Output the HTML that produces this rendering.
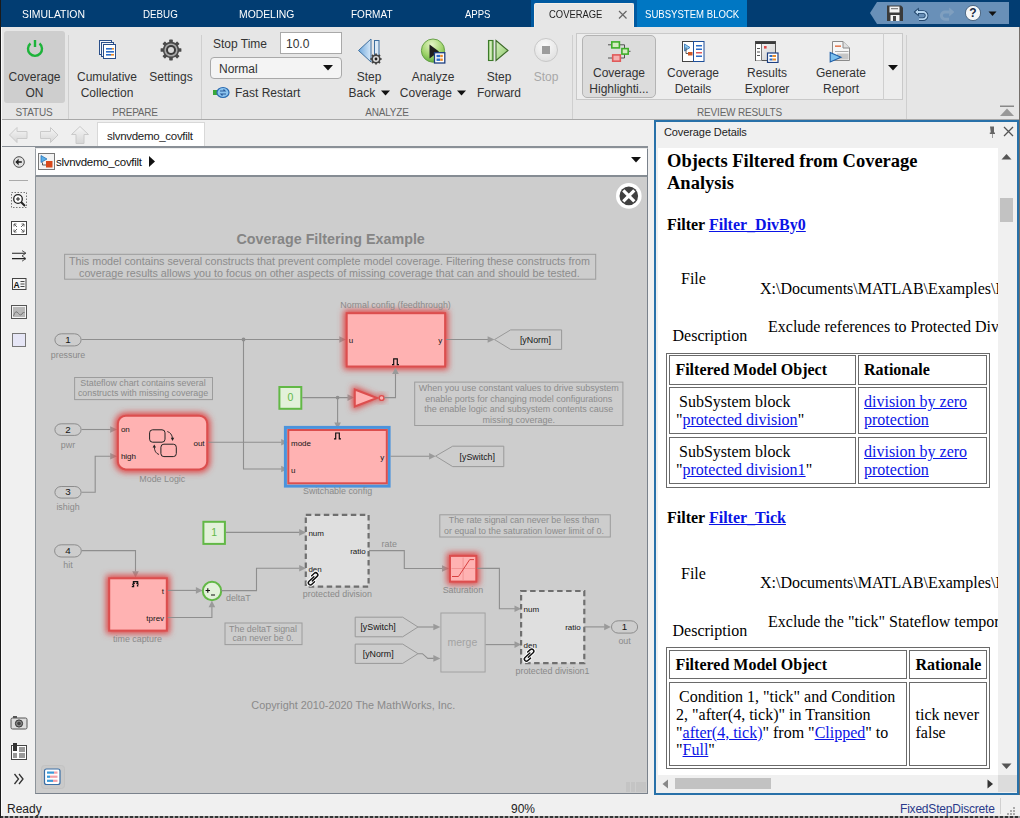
<!DOCTYPE html>
<html><head><meta charset="utf-8">
<style>
*{margin:0;padding:0;box-sizing:border-box}
html,body{width:1020px;height:818px;overflow:hidden;background:#f0f0f0;font-family:"Liberation Sans",sans-serif;position:relative}
.a{position:absolute}
#topbar{left:0;top:0;width:1020px;height:27px;background:#023d72}
.tt{position:absolute;top:7px;color:#fff;font-size:11.5px;line-height:14px;transform-origin:0 0}
#ribbon{left:0;top:27px;width:1020px;height:93px;background:#e6e6e6;border-bottom:1px solid #a8a8a8}
.lbl{position:absolute;font-size:12px;color:#333;text-align:center;line-height:16px}
.sec{position:absolute;top:80px;font-size:10px;letter-spacing:-0.2px;color:#666;text-align:center}
.vsep{position:absolute;width:1px;background:#cfcfcf}
#pc div{position:absolute;white-space:nowrap}
.s16{font:16px/16px "Liberation Serif",serif;color:#000}
.b16{font:bold 16px/16px "Liberation Serif",serif;color:#000}
.h18{font:bold 18.5px/22px "Liberation Serif",serif;color:#000}
.lk{color:#0a14e6;text-decoration:underline;text-underline-offset:1px}
.bx{border:1px solid #6a6a6a}
</style></head><body>
<div id="topbar" class="a">
  <div class="tt" style="left:22px;transform:scaleX(0.907)">SIMULATION</div>
  <div class="tt" style="left:142.5px;transform:scaleX(0.851)">DEBUG</div>
  <div class="tt" style="left:238.6px;transform:scaleX(0.902)">MODELING</div>
  <div class="tt" style="left:351.2px;transform:scaleX(0.870)">FORMAT</div>
  <div class="tt" style="left:465.3px;transform:scaleX(0.831)">APPS</div>
  <div class="a" style="left:531px;top:0;width:106px;height:27px;background:#0059a0"></div>
  <div class="a" style="left:534px;top:3px;width:100px;height:24px;background:#e6e6e6;border:1px solid #f4efe8;border-bottom:none;border-radius:2px 2px 0 0"></div>
  <div class="tt" style="left:549.2px;transform:scaleX(0.819);color:#222">COVERAGE</div>
  <svg class="a" style="left:618px;top:10px" width="10" height="10"><path d="M1 1 L8.5 8.5 M8.5 1 L1 8.5" stroke="#666" stroke-width="1.2"/></svg>
  <div class="a" style="left:637px;top:0;width:110px;height:27px;background:#0077c3"></div>
  <div class="tt" style="left:645px;transform:scaleX(0.833)">SUBSYSTEM BLOCK</div>
  <svg class="a" style="left:868px;top:2px" width="142" height="22"><polygon points="2,11 9,0 141,0 141,22 9,22" fill="#6990b8"/></svg>
  <svg class="a" style="left:886px;top:4px" width="18" height="18" viewBox="0 0 18 18"><path d="M1 1.5 H15 L17 3.5 V17 H1 Z" fill="#3a3a3a"/><rect x="3.5" y="2.5" width="10" height="6" fill="#f2f2f2"/><rect x="5" y="4.2" width="7" height="1" fill="#666"/><rect x="4.5" y="11" width="9" height="6" fill="#f2f2f2"/><rect x="7" y="12" width="3" height="5" fill="#444"/></svg>
  <svg class="a" style="left:913px;top:7px" width="17" height="14" viewBox="0 0 17 14"><path d="M2.5 5 H10 A3.6 3.6 0 0 1 10 12.2 H6" fill="none" stroke="#23466c" stroke-width="3.6"/><polygon points="0.6,5 5.8,0.6 5.8,9.4" fill="#23466c"/><path d="M3.5 5 H10 A3.6 3.6 0 0 1 10 12.2 H6" fill="none" stroke="#b9d8f2" stroke-width="1.8"/><polygon points="2.2,5 5,2.6 5,7.4" fill="#b9d8f2"/></svg>
  <svg class="a" style="left:938px;top:7px" width="17" height="14" viewBox="0 0 17 14"><path d="M14.5 5 H7 A3.6 3.6 0 0 0 7 12.2 H11" fill="none" stroke="#7f9fbf" stroke-width="3"/><polygon points="16.4,5 11.2,0.6 11.2,9.4" fill="#7f9fbf"/></svg>
  <svg class="a" style="left:964px;top:4px" width="18" height="18" viewBox="0 0 18 18"><circle cx="9" cy="9" r="7.6" fill="#f4f6f8" stroke="#3a5470" stroke-width="0.8"/><text x="9" y="13.3" font-size="12" font-weight="bold" fill="#1a2a44" text-anchor="middle" font-family="Liberation Sans">?</text></svg>
  <svg class="a" style="left:988px;top:11px" width="10" height="6"><polygon points="0.5,0.5 8.5,0.5 4.5,5" fill="#111"/></svg>
</div>
<div id="ribbon" class="a">
  <div class="a" style="left:4px;top:4px;width:61px;height:72px;background:#cecece;border-radius:3px"></div>
  <svg class="a" style="left:25px;top:11px" width="20" height="20" viewBox="0 0 20 20"><path d="M5.5 5.5 A7 7 0 1 0 14.5 5.5" fill="none" stroke="#1db33a" stroke-width="2.4"/><line x1="10" y1="2" x2="10" y2="9" stroke="#1db33a" stroke-width="2.4"/></svg>
  <div class="lbl" style="left:4px;top:42px;width:61px">Coverage<br>ON</div>
  <div class="sec" style="left:0;width:68px">STATUS</div>
  <div class="vsep" style="left:68px;top:8px;height:84px"></div>

  <svg class="a" style="left:98px;top:12px" width="20" height="21" viewBox="0 0 20 21"><rect x="1.5" y="1.5" width="12" height="14" fill="#f4f6fa" stroke="#2a4f8a"/><rect x="3.5" y="3.5" width="12" height="14" fill="#f4f6fa" stroke="#2a4f8a"/><rect x="5.5" y="5.5" width="12" height="14" fill="#fff" stroke="#2a4f8a"/><rect x="8" y="9" width="6" height="1.6" fill="#2a6cc8"/><rect x="14" y="9" width="2" height="1.6" fill="#e88a2a"/><rect x="8" y="12" width="8" height="1.6" fill="#2a6cc8"/><rect x="8" y="15" width="5" height="1.6" fill="#2a6cc8"/><rect x="13" y="15" width="3" height="1.6" fill="#e88a2a"/></svg>
  <div class="lbl" style="left:72px;top:42px;width:70px">Cumulative<br>Collection</div>
  <svg class="a" style="left:160px;top:12px" width="22" height="22" viewBox="0 0 22 22"><g fill="#4a4a4a"><rect x="9.2" y="0.6" width="3.6" height="4" rx="0.6" transform="rotate(0 11 11)"/><rect x="9.2" y="0.6" width="3.6" height="4" rx="0.6" transform="rotate(45 11 11)"/><rect x="9.2" y="0.6" width="3.6" height="4" rx="0.6" transform="rotate(90 11 11)"/><rect x="9.2" y="0.6" width="3.6" height="4" rx="0.6" transform="rotate(135 11 11)"/><rect x="9.2" y="0.6" width="3.6" height="4" rx="0.6" transform="rotate(180 11 11)"/><rect x="9.2" y="0.6" width="3.6" height="4" rx="0.6" transform="rotate(225 11 11)"/><rect x="9.2" y="0.6" width="3.6" height="4" rx="0.6" transform="rotate(270 11 11)"/><rect x="9.2" y="0.6" width="3.6" height="4" rx="0.6" transform="rotate(315 11 11)"/><circle cx="11" cy="11" r="8.2"/></g><circle cx="11" cy="11" r="6.6" fill="#a8a8a8"/><circle cx="11" cy="11" r="5" fill="#3c3c3c"/><circle cx="11" cy="11" r="3" fill="#d8d8d8"/></svg>
  <div class="lbl" style="left:145px;top:42px;width:52px">Settings</div>
  <div class="sec" style="left:69px;width:132px">PREPARE</div>
  <div class="vsep" style="left:201px;top:8px;height:84px"></div>

  <div class="lbl" style="left:213px;top:9px;text-align:left">Stop Time</div>
  <div class="a" style="left:280px;top:5px;width:62px;height:22px;background:#fff;border:1px solid #a9a9a9"></div>
  <div class="lbl" style="left:286px;top:9px;text-align:left">10.0</div>
  <div class="a" style="left:210px;top:30px;width:132px;height:22px;background:#f4f4f4;border:1px solid #a9a9a9;border-radius:4px"></div>
  <div class="lbl" style="left:219px;top:34px;text-align:left">Normal</div>
  <svg class="a" style="left:323px;top:38px" width="11" height="6"><polygon points="0,0 10,0 5,5.5" fill="#111"/></svg>
  <svg class="a" style="left:213px;top:59px" width="17" height="13" viewBox="0 0 17 13"><rect x="0" y="4" width="4" height="5" fill="#3aa83a"/><ellipse cx="10" cy="6.5" rx="6" ry="5" fill="#8cc4ef" stroke="#2a6ab0" stroke-width="1.2"/><path d="M7 5 h5 l-1.5-1.5 M13 8 h-5 l1.5 1.5" stroke="#2a5a9a" fill="none" stroke-width="1.1"/></svg>
  <div class="lbl" style="left:235px;top:58px;text-align:left">Fast Restart</div>

  <svg class="a" style="left:356px;top:10px" width="28" height="28" viewBox="0 0 28 28"><defs><linearGradient id="gsb" x1="0" y1="0" x2="1" y2="0"><stop offset="0" stop-color="#6fa8dc"/><stop offset="1" stop-color="#d6e8f8"/></linearGradient></defs><polygon points="2.5,16.5 15,28 15,5" fill="url(#gsb)" stroke="#3f6f9f" stroke-width="1" transform="translate(0,-3)"/><rect x="18.5" y="3.5" width="4.5" height="15" fill="#dbe9f6" stroke="#3f6f9f" stroke-width="1"/><g transform="translate(20,22)"><circle r="4.6" fill="#444"/><g stroke="#444" stroke-width="1.8"><line x1="0" y1="-5.6" x2="0" y2="5.6"/><line x1="-5.6" y1="0" x2="5.6" y2="0"/><line x1="-4" y1="-4" x2="4" y2="4"/><line x1="4" y1="-4" x2="-4" y2="4"/></g><circle r="3" fill="#ddd"/><circle r="1.4" fill="#222"/></g></svg>
  <div class="lbl" style="left:345px;top:42px;width:48px">Step<br>Back <svg width="9" height="6" style="margin-left:2px;vertical-align:1px"><polygon points="0,0.5 9,0.5 4.5,5.5" fill="#111"/></svg></div>

  <svg class="a" style="left:419px;top:36px" width="0" height="0"></svg>
  <svg class="a" style="left:420px;top:11px" width="27" height="27" viewBox="0 0 27 27"><defs><radialGradient id="ga" cx="0.45" cy="0.25" r="0.8"><stop offset="0" stop-color="#e6f5c8"/><stop offset="0.6" stop-color="#9fd36a"/><stop offset="1" stop-color="#5aa83a"/></radialGradient></defs><circle cx="13" cy="12.6" r="11.6" fill="url(#ga)" stroke="#5e9a3e" stroke-width="0.9"/><polygon points="9.5,6.5 19,13.5 9.5,20.5" fill="#1e1e1e"/><rect x="14.5" y="14.7" width="10.3" height="10.3" fill="#fff" stroke="#1e3f80" stroke-width="1.3"/><rect x="16.5" y="16.8" width="3.6" height="2.4" fill="#2a6cc8"/><rect x="20.2" y="16.8" width="2.6" height="2.4" fill="#e88a2a"/><rect x="16.5" y="20.5" width="3.6" height="2.4" fill="#2a6cc8"/><rect x="20.2" y="20.5" width="2.6" height="2.4" fill="#e88a2a"/></svg>
  <div class="lbl" style="left:398px;top:42px;width:70px">Analyze<br>Coverage <svg width="9" height="6" style="margin-left:2px;vertical-align:1px"><polygon points="0,0.5 9,0.5 4.5,5.5" fill="#111"/></svg></div>

  <svg class="a" style="left:487px;top:12px" width="23" height="23" viewBox="0 0 23 23"><defs><linearGradient id="gsf" x1="0" y1="0" x2="1" y2="0"><stop offset="0" stop-color="#7cc05a"/><stop offset="0.5" stop-color="#e2f4cf"/><stop offset="1" stop-color="#6fb24a"/></linearGradient><linearGradient id="gsf2" x1="0" y1="0" x2="1" y2="1"><stop offset="0" stop-color="#d6efbf"/><stop offset="1" stop-color="#8cc86a"/></linearGradient></defs><rect x="1.5" y="1.5" width="4.5" height="20" fill="url(#gsf)" stroke="#3d7a2a" stroke-width="1.1"/><polygon points="9,1.5 21,11.5 9,21.5" fill="url(#gsf2)" stroke="#3d6a2a" stroke-width="1.1"/></svg>
  <div class="lbl" style="left:474px;top:42px;width:50px">Step<br>Forward</div>

  <svg class="a" style="left:533px;top:10px" width="26" height="26" viewBox="0 0 26 26"><defs><radialGradient id="gst" cx="0.45" cy="0.3" r="0.75"><stop offset="0" stop-color="#fbfbfb"/><stop offset="1" stop-color="#dedede"/></radialGradient></defs><circle cx="13" cy="13" r="11.5" fill="url(#gst)" stroke="#c8c8c8"/><rect x="9" y="9" width="8" height="8" fill="#9c9c9c"/></svg>
  <div class="lbl" style="left:528px;top:42px;width:36px;color:#a8a8a8">Stop</div>
  <div class="sec" style="left:202px;width:370px">ANALYZE</div>
  <div class="vsep" style="left:572px;top:8px;height:84px"></div>

  <div class="a" style="left:576px;top:6px;width:327px;height:67px;background:#ededed;border:1px solid #c9c9c9"></div>
  <div class="a" style="left:582px;top:8px;width:74px;height:63px;background:#dcdcdc;border:1px solid #b4b4b4;border-radius:5px"></div>
  <svg class="a" style="left:606px;top:13px" width="26" height="24" viewBox="606 40 26 24"><path d="M608 44.8 H611.5 M619.5 44.8 H624.5 V48.5 M624.5 54 V58 H620.5 M608 58 H612.5 M628.5 51.3 H630.5" stroke="#444" stroke-width="0.9" fill="none"/><rect x="611.8" y="41.9" width="7.6" height="6" fill="#d4ecc0" stroke="#3fae2a" stroke-width="1.6"/><rect x="621.9" y="48.6" width="6.3" height="5.5" fill="#d4ecc0" stroke="#3fae2a" stroke-width="1.6"/><rect x="612.7" y="54.9" width="7.6" height="6.3" fill="#f4b0b0" stroke="#e05a5a" stroke-width="1.6"/></svg>
  <div class="lbl" style="left:582px;top:38px;width:74px">Coverage<br>Highlighti...</div>

  <svg class="a" style="left:682px;top:14px" width="23" height="22" viewBox="0 0 23 22"><rect x="0.5" y="0.5" width="11" height="20" fill="#fff" stroke="#444"/><rect x="11.5" y="0.5" width="10.5" height="20" fill="#fff" stroke="#1e4f9a"/><polygon points="2.5,3 8,6.5 2.5,10" fill="#8ecaf0" stroke="#2a6ab0" stroke-width="0.8"/><rect x="6" y="11" width="4.5" height="3.5" fill="#d05a2a"/><path d="M4 6.5 V12.5 H6" stroke="#333" fill="none" stroke-width="0.8"/><rect x="14" y="4" width="6" height="1.5" fill="#2a6cc8"/><rect x="14" y="7.5" width="6" height="1.5" fill="#2a6cc8"/><rect x="14" y="11" width="6" height="1.5" fill="#e05a5a"/><rect x="14" y="14.5" width="6" height="1.5" fill="#2a6cc8"/></svg>
  <div class="lbl" style="left:660px;top:38px;width:66px">Coverage<br>Details</div>

  <svg class="a" style="left:755px;top:14px" width="24" height="22" viewBox="0 0 24 22"><defs><linearGradient id="gre" x1="0" y1="0" x2="1" y2="1"><stop offset="0" stop-color="#fafafa"/><stop offset="1" stop-color="#cfcfcf"/></linearGradient></defs><rect x="0.5" y="0.5" width="20" height="19" fill="url(#gre)" stroke="#555"/><rect x="0.5" y="0.5" width="20" height="2.5" fill="#3a3a3a"/><rect x="1" y="3" width="6" height="16.5" fill="#fff"/><path d="M6.5 3 V19.5" stroke="#777"/><rect x="2" y="7" width="3" height="1" fill="#555"/><rect x="2" y="10.5" width="3" height="1" fill="#555"/><rect x="2" y="14" width="3" height="1" fill="#555"/><rect x="9" y="5" width="2.6" height="2.6" fill="#e04848"/><rect x="12.5" y="12" width="10.5" height="9.5" fill="#fff" stroke="#1e3f80" stroke-width="1.2"/><rect x="14.5" y="14" width="3" height="2" fill="#2a6cc8"/><rect x="17.5" y="14" width="3.5" height="2" fill="#e88a2a"/><rect x="14.5" y="17.5" width="3" height="2" fill="#2a6cc8"/><rect x="17.5" y="17.5" width="3.5" height="2" fill="#e88a2a"/></svg>
  <div class="lbl" style="left:735px;top:38px;width:64px">Results<br>Explorer</div>

  <svg class="a" style="left:829px;top:14px" width="23" height="22" viewBox="0 0 23 22"><path d="M3.5 0.5 H14 L20.5 7 V19.5 H3.5 Z" fill="#f7f7f7" stroke="#8a8a8a"/><path d="M14 0.5 V7 H20.5" fill="#e0e0e0" stroke="#8a8a8a"/><rect x="6" y="4.5" width="6" height="1.3" fill="#e06030"/><rect x="6" y="10" width="13.5" height="1" fill="#aaa"/><rect x="8" y="12.5" width="11.5" height="6" fill="#c6c6c6"/><polygon points="1.2,11.5 12,16.2 1.2,21" fill="#7cc0ee" stroke="#1e5fa8" stroke-width="1.1"/></svg>
  <div class="lbl" style="left:808px;top:38px;width:66px">Generate<br>Report</div>
  <div class="a" style="left:883px;top:6px;width:1px;height:67px;background:#cfcfcf"></div>
  <svg class="a" style="left:888px;top:38px" width="11" height="6"><polygon points="0,0 10,0 5,5.5" fill="#111"/></svg>
  <div class="sec" style="left:576px;width:327px">REVIEW RESULTS</div>
  <div class="vsep" style="left:906px;top:8px;height:84px"></div>
  <svg class="a" style="left:999px;top:78px" width="16" height="12" viewBox="0 0 16 12"><rect x="1" y="0.5" width="14" height="1.5" fill="#888"/><polygon points="1,11 8,3.5 15,11" fill="#999"/></svg>
</div>


<div class="a" style="left:0;top:0;width:1px;height:818px;background:#1a1a1a;z-index:5"></div><div class="a" style="left:1px;top:27px;width:1px;height:789px;background:#fafafa;z-index:5"></div>
<div class="a" style="left:1019px;top:27px;width:1px;height:768px;background:#746f6b;z-index:5"></div>
<!-- tab strip -->
<div class="a" style="left:1px;top:120px;width:653px;height:27px;background:#efefef"></div>
<svg class="a" style="left:8px;top:125px" width="84" height="20" viewBox="0 0 84 20"><defs><linearGradient id="gnav" x1="0" y1="0" x2="0" y2="1"><stop offset="0" stop-color="#f6f6f6"/><stop offset="1" stop-color="#d6d6d6"/></linearGradient></defs><g fill="url(#gnav)" stroke="#cacaca" stroke-width="1"><polygon points="1.5,10 9,2.5 9,6.5 19,6.5 19,13.5 9,13.5 9,17.5"/><polygon points="50,10 42.5,2.5 42.5,6.5 32.5,6.5 32.5,13.5 42.5,13.5 42.5,17.5"/><polygon points="72,1.5 80.5,9.5 76,9.5 76,18.5 68,18.5 68,9.5 63.5,9.5"/></g></svg>
<div class="a" style="left:97px;top:122px;width:108px;height:25px;background:#fff;border:1px solid #d8d8d8;border-bottom:none"></div>
<div class="a" style="left:107px;top:130px;font-size:11.5px;line-height:13px;color:#222;letter-spacing:-0.3px">slvnvdemo_covfilt</div>
<div class="a" style="left:1px;top:146px;width:647px;height:2px;background:#8a9097"></div>
<!-- left toolbar -->
<div class="a" style="left:1px;top:147px;width:34px;height:648px;background:#f0f0f0"></div>
<svg class="a" style="left:0;top:147px" width="35" height="648" viewBox="0 0 35 648">
 <circle cx="19" cy="15" r="5.3" fill="#e2e2e2" stroke="#4a4a4a" stroke-width="1"/><path d="M16.2 15 H21.8" stroke="#222" stroke-width="1.6"/><polygon points="15.3,15 18.6,11.8 18.6,18.2" fill="#222"/>
 <line x1="9" y1="33.5" x2="28" y2="33.5" stroke="#aaa"/>
 <rect x="11.5" y="45.5" width="15" height="15" fill="none" stroke="#777" stroke-dasharray="1.5,1.5"/><circle cx="18" cy="52" r="4.3" fill="#fff" stroke="#222" stroke-width="1.3"/><path d="M16 52 H20 M18 50 V54" stroke="#222" stroke-width="1"/><path d="M21 55 L25 59" stroke="#222" stroke-width="2"/>
 <rect x="11.5" y="74.5" width="15" height="13" fill="#fff" stroke="#444"/><path d="M14 77 L17 80 M14 77 H16.5 M14 77 V79.5 M24 77 L21 80 M24 77 H21.5 M24 77 V79.5 M14 85 L17 82 M14 85 H16.5 M14 85 V82.5 M24 85 L21 82 M24 85 H21.5 M24 85 V82.5" stroke="#555" stroke-width="0.9" fill="none"/>
 <path d="M12 106.2 H25.5 M12 111.6 H25.5" stroke="#222" stroke-width="1.1" fill="none"/><path d="M22 103.6 L26 106.2 L22 108.8 M22 109 L26 111.6 L22 114.2" stroke="#444" stroke-width="0.9" fill="none"/>
 <rect x="12.5" y="131.5" width="13.5" height="11" fill="#f4f4f4" stroke="#444"/><text x="13.6" y="140.6" font-size="8.5" font-weight="bold" fill="#111" font-family="Liberation Sans">A</text><path d="M20.5 134.5 H24.5 M20.5 137 H24.5 M20.5 139.5 H24.5" stroke="#333" stroke-width="0.9"/>
 <rect x="11.5" y="158.5" width="15" height="13" fill="#f4f4f4" stroke="#555"/><rect x="13" y="160" width="12" height="10" fill="#b8b8b8"/><path d="M13.5 169 Q15.5 162 18.5 166.5 Q20.5 170 23.5 165 L24.5 166" fill="none" stroke="#777" stroke-width="1"/>
 <rect x="12.5" y="186.5" width="13" height="13" fill="#e6e6f6" stroke="#777"/>
 <rect x="11" y="571" width="16" height="11" rx="1.5" fill="#ddd" stroke="#555"/><rect x="13" y="569" width="4" height="2" fill="#555"/><circle cx="19" cy="576.5" r="3.6" fill="#888" stroke="#333"/><circle cx="19" cy="576.5" r="1.8" fill="#444"/>
 <rect x="11.5" y="598.5" width="15" height="14" fill="#fff" stroke="#444"/><rect x="13" y="596" width="4" height="8" fill="#333"/><rect x="19" y="600" width="6" height="5" fill="#999"/><rect x="13" y="606" width="4" height="5" fill="#999"/><rect x="19" y="606" width="6" height="5" fill="#999"/>
 <path d="M14.5 627 L18.5 632 L14.5 637 M19 627 L23 632 L19 637" stroke="#333" stroke-width="1.3" fill="none"/>
</svg>
<!-- breadcrumb -->
<div class="a" style="left:35px;top:148px;width:613px;height:29px;background:#fff;border-top:1px solid #eee;border-left:1px solid #9aa0a6;border-right:1px solid #7a828c;border-bottom:2px solid #858c93"></div>
<svg class="a" style="left:38px;top:153px" width="17" height="17" viewBox="0 0 17 17"><rect x="0.5" y="0.5" width="16" height="16" fill="#f3f3f3" stroke="#777"/><polygon points="3,2.5 9,6 3,9.5" fill="#5aaee8" stroke="#1e6ab0" stroke-width="0.7"/><rect x="8" y="8" width="6.5" height="6.5" fill="#d9481a"/><path d="M4.5 9.5 V12 H8" stroke="#333" fill="none" stroke-width="0.8"/></svg>
<div class="a" style="left:56px;top:156px;font-size:11.5px;line-height:13px;color:#111;letter-spacing:-0.3px">slvnvdemo_covfilt</div>
<svg class="a" style="left:149px;top:156px" width="7" height="11"><polygon points="0,0 6,5.5 0,11" fill="#111"/></svg>
<svg class="a" style="left:631px;top:157px" width="11" height="6"><polygon points="0,0 10,0 5,5.5" fill="#111"/></svg>
<!-- canvas -->
<div id="canvas" class="a" style="left:35px;top:177px;width:613px;height:617px;background:#cdcdcd;border-left:1px solid #8d949a;border-right:1px solid #7a828c;border-bottom:1px solid #7a828c;overflow:hidden"></div>
<!--CANVAS_SVG--><svg class="a" style="left:36px;top:178px" width="611" height="615" viewBox="36 178 611 615" font-family="Liberation Sans"><defs><filter id="glow" x="-50%" y="-50%" width="200%" height="200%"><feGaussianBlur stdDeviation="3"/></filter></defs>
<rect x="36" y="178" width="611" height="615" fill="#cdcdcd"/>
<circle cx="628.8" cy="195.9" r="12.8" fill="#fff"/><circle cx="628.8" cy="195.9" r="9.3" fill="#404040"/><path d="M623.3,190.4 L634.3,201.4 M634.3,190.4 L623.3,201.4" stroke="#fff" stroke-width="3.2"/>
<text x="236.5" y="244.1" font-size="14.3" fill="#858585" text-anchor="start" font-weight="bold">Coverage Filtering Example</text>
<rect x="64.6" y="254.3" width="531.1" height="24.899999999999977" fill="none" stroke="#9c9c9c" stroke-width="1"/>
<text x="329.4" y="264.6" font-size="10.75" fill="#8c8c8c" text-anchor="middle" font-weight="normal">This model contains several constructs that prevent complete model coverage. Filtering these constructs from</text>
<text x="329.4" y="276.5" font-size="10.75" fill="#8c8c8c" text-anchor="middle" font-weight="normal">coverage results allows you to focus on other aspects of missing coverage that can and should be tested.</text>
<rect x="54.9" y="333.8" width="26.199999999999996" height="12.099999999999966" rx="6.549999999999983" fill="none" stroke="#8c8c8c" stroke-width="1"/>
<text x="68.0" y="342.9" font-size="9.8" fill="#151515" text-anchor="middle" font-weight="normal">1</text>
<text x="68.0" y="357.5" font-size="8.9" fill="#8a8a8a" text-anchor="middle" font-weight="normal">pressure</text>
<path d="M81.6,339.5 L339.5,339.5" fill="none" stroke="#8e8e8e" stroke-width="1.1"/>
<polygon points="339.3,336.2 346,339.5 339.3,342.8" fill="#9a9a9a"/>
<circle cx="243.5" cy="339.5" r="1.9" fill="#8e8e8e"/>
<path d="M243.5,339.5 L243.5,469 L281.5,469" fill="none" stroke="#8e8e8e" stroke-width="1.1"/>
<polygon points="281.2,465.7 287.5,469 281.2,472.3" fill="#9a9a9a"/>
<rect x="343.7" y="310.2" width="104.40000000000003" height="59.30000000000001" rx="0" fill="#e04444" filter="url(#glow)"/>
<rect x="346.7" y="313.2" width="98.40000000000003" height="53.30000000000001" rx="0" fill="#ffb2b2" stroke="#dc4e4e" stroke-width="2"/>
<text x="348.7" y="343.3" font-size="8" fill="#151515" text-anchor="start" font-weight="normal">u</text>
<text x="442.3" y="343.3" font-size="8" fill="#151515" text-anchor="end" font-weight="normal">y</text>
<path d="M392.0,364.6 H393.7 V358.8 H397.3 V364.6 H399.0" fill="none" stroke="#111" stroke-width="1.2"/>
<text x="340.3" y="308.1" font-size="8.9" fill="#8a8a8a" text-anchor="start" font-weight="normal">Normal config (feedthrough)</text>
<path d="M446.1,339.5 L488,339.5" fill="none" stroke="#8e8e8e" stroke-width="1.1"/>
<polygon points="487.6,336.2 494.5,339.5 487.6,342.8" fill="#9a9a9a"/>
<polygon points="494.5,339.6 510.6,329.9 561.6,329.9 561.6,349.4 510.6,349.4" fill="none" stroke="#999" stroke-width="1"/>
<text x="519.9" y="342.8" font-size="8.85" fill="#151515" text-anchor="start" font-weight="normal">[yNorm]</text>
<rect x="74.6" y="377.5" width="137.9" height="22.100000000000023" fill="none" stroke="#9c9c9c" stroke-width="1"/>
<text x="143" y="386.3" font-size="8.9" fill="#8c8c8c" text-anchor="middle" font-weight="normal">Stateflow chart contains several</text>
<text x="143" y="396.2" font-size="8.9" fill="#8c8c8c" text-anchor="middle" font-weight="normal">constructs with missing coverage</text>
<rect x="279.4" y="387" width="21.9" height="21.8" fill="#e3f1da" stroke="#62b846" stroke-width="2"/>
<text x="290.3" y="401.0" font-size="10.5" fill="#62b846" text-anchor="middle" font-weight="normal">0</text>
<path d="M302.3,397.6 L348,397.6" fill="none" stroke="#8e8e8e" stroke-width="1.1"/>
<polygon points="347.5,394.3 354,397.6 347.5,400.90000000000003" fill="#9a9a9a"/>
<circle cx="337.6" cy="397.6" r="1.9" fill="#8e8e8e"/>
<path d="M337.6,397.6 L337.6,423" fill="none" stroke="#8e8e8e" stroke-width="1.1"/>
<polygon points="334.3,422.5 337.6,429 340.90000000000003,422.5" fill="#9a9a9a"/>
<polygon points="352.3,385.8 352.3,410.2 381,398" fill="#dd4040" filter="url(#glow)"/><circle cx="381.6" cy="398" r="3.5" fill="#dd4040" filter="url(#glow)"/>
<polygon points="354.8,389.5 354.8,406.5 377,398" fill="#ffb2b2" stroke="#dc4e4e" stroke-width="2" stroke-linejoin="miter"/>
<circle cx="381.6" cy="398" r="2.4" fill="#ffb2b2" stroke="#dc4e4e" stroke-width="1.4"/>
<path d="M384,397.6 L395.5,397.6 L395.5,373.5" fill="none" stroke="#8e8e8e" stroke-width="1.1"/>
<polygon points="392.2,374 395.5,367.6 398.8,374" fill="#9a9a9a"/>
<rect x="414.7" y="382.1" width="208.2" height="43.39999999999998" fill="none" stroke="#9c9c9c" stroke-width="1"/>
<text x="518.8" y="390.6" font-size="9.0" fill="#8c8c8c" text-anchor="middle" font-weight="normal">When you use constant values to drive subsystem</text>
<text x="518.8" y="401.5" font-size="9.0" fill="#8c8c8c" text-anchor="middle" font-weight="normal">enable ports for changing model configurations</text>
<text x="518.8" y="412.2" font-size="9.0" fill="#8c8c8c" text-anchor="middle" font-weight="normal">the enable logic and subsystem contents cause</text>
<text x="518.8" y="423.1" font-size="9.0" fill="#8c8c8c" text-anchor="middle" font-weight="normal">missing coverage.</text>
<rect x="54.9" y="423.8" width="26.199999999999996" height="11.599999999999966" rx="6.299999999999983" fill="none" stroke="#8c8c8c" stroke-width="1"/>
<text x="68.0" y="432.6" font-size="9.8" fill="#151515" text-anchor="middle" font-weight="normal">2</text>
<text x="68.0" y="447.5" font-size="8.9" fill="#8a8a8a" text-anchor="middle" font-weight="normal">pwr</text>
<path d="M81.6,429.5 L110.5,429.5" fill="none" stroke="#8e8e8e" stroke-width="1.1"/>
<polygon points="110.2,426.2 117.2,429.5 110.2,432.8" fill="#9a9a9a"/>
<rect x="54.9" y="486.5" width="26.199999999999996" height="11.600000000000023" rx="6.300000000000011" fill="none" stroke="#8c8c8c" stroke-width="1"/>
<text x="68.0" y="495.3" font-size="9.8" fill="#151515" text-anchor="middle" font-weight="normal">3</text>
<text x="68.0" y="509.7" font-size="8.9" fill="#8a8a8a" text-anchor="middle" font-weight="normal">ishigh</text>
<path d="M81.6,492.3 L95.2,492.3 L95.2,456.3 L110.5,456.3" fill="none" stroke="#8e8e8e" stroke-width="1.1"/>
<polygon points="110.2,453.0 117.2,456.3 110.2,459.6" fill="#9a9a9a"/>
<rect x="114.9" y="412.7" width="95.29999999999998" height="59.69999999999999" rx="11" fill="#e04444" filter="url(#glow)"/>
<rect x="117.9" y="415.7" width="89.29999999999998" height="53.69999999999999" rx="8" fill="#ffb2b2" stroke="#dc4e4e" stroke-width="2"/>
<text x="120.9" y="432.2" font-size="8" fill="#151515" text-anchor="start" font-weight="normal">on</text>
<text x="120.9" y="459.2" font-size="8" fill="#151515" text-anchor="start" font-weight="normal">high</text>
<text x="204.6" y="446.4" font-size="8" fill="#151515" text-anchor="end" font-weight="normal">out</text>
<rect x="149.6" y="429.8" width="15.4" height="12.4" rx="3" fill="none" stroke="#222" stroke-width="1"/>
<rect x="160.9" y="444.2" width="15.4" height="12.4" rx="3" fill="none" stroke="#222" stroke-width="1"/>
<path d="M167.3,431.5 Q172,433 172.5,438.5" fill="none" stroke="#222" stroke-width="0.9"/><polygon points="170.8,437.8 174.2,437.8 172.5,441" fill="#222"/>
<path d="M159,454.5 Q154.5,453 154.3,447" fill="none" stroke="#222" stroke-width="0.9"/><polygon points="152.6,447.6 156,447.6 154.3,444.4" fill="#222"/>
<text x="162.3" y="482.0" font-size="8.9" fill="#8a8a8a" text-anchor="middle" font-weight="normal">Mode Logic</text>
<path d="M208.2,442.3 L281.5,442.3" fill="none" stroke="#8e8e8e" stroke-width="1.1"/>
<polygon points="281.2,439.0 287.5,442.3 281.2,445.6" fill="#9a9a9a"/>
<rect x="285.4" y="427.4" width="103.7" height="58.7" fill="none" stroke="#4b93dc" stroke-width="3"/>
<rect x="288.3" y="430" width="98.5" height="53.3" fill="#ffb2b2" stroke="#dc4e4e" stroke-width="2"/>
<text x="291" y="446.1" font-size="8" fill="#151515" text-anchor="start" font-weight="normal">mode</text>
<text x="291" y="473.1" font-size="8" fill="#151515" text-anchor="start" font-weight="normal">u</text>
<text x="384.3" y="460.4" font-size="8" fill="#151515" text-anchor="end" font-weight="normal">y</text>
<path d="M334.0,438.8 H335.7 V433 H339.3 V438.8 H341.0" fill="none" stroke="#111" stroke-width="1.2"/>
<text x="337.6" y="494.3" font-size="8.9" fill="#8a8a8a" text-anchor="middle" font-weight="normal">Switchable config</text>
<path d="M390.6,456.3 L429.5,456.3" fill="none" stroke="#8e8e8e" stroke-width="1.1"/>
<polygon points="429.1,453.0 435.6,456.3 429.1,459.6" fill="#9a9a9a"/>
<polygon points="435.6,456.1 452.7,446.2 503.8,446.2 503.8,466.6 452.7,466.6" fill="none" stroke="#999" stroke-width="1"/>
<text x="459.6" y="459.7" font-size="8.85" fill="#151515" text-anchor="start" font-weight="normal">[ySwitch]</text>
<rect x="203.4" y="521.8" width="21.5" height="22.1" fill="#e3f1da" stroke="#62b846" stroke-width="2"/>
<text x="214.1" y="536.2" font-size="10.5" fill="#62b846" text-anchor="middle" font-weight="normal">1</text>
<path d="M225.9,532.4 L299.5,532.4" fill="none" stroke="#8e8e8e" stroke-width="1.1"/>
<polygon points="299.2,529.1 306,532.4 299.2,535.6999999999999" fill="#9a9a9a"/>
<rect x="305.8" y="514.8" width="62.80000000000001" height="71.80000000000007" fill="#dfdfdf" stroke="#6f6f6f" stroke-width="2.2" stroke-dasharray="5.5,3.5"/>
<text x="308.4" y="536.3" font-size="8" fill="#151515" text-anchor="start" font-weight="normal">num</text>
<text x="308.4" y="571.6" font-size="8" fill="#151515" text-anchor="start" font-weight="normal">den</text>
<text x="365.7" y="553.9" font-size="8" fill="#151515" text-anchor="end" font-weight="normal">ratio</text>
<g transform="translate(313.1,578.8000000000001) rotate(-43)"><g fill="none" stroke="#fff" stroke-width="3.4" stroke-linecap="round"><path d="M2.0,-1.0 H-4.6 A2.1,2.1 0 0 0 -4.6,3.2 H-1.0"/><path d="M-2.0,1.0 H4.6 A2.1,2.1 0 0 0 4.6,-3.2 H1.0"/></g><g fill="none" stroke="#111" stroke-width="1.45" stroke-linecap="round"><path d="M2.0,-1.0 H-4.6 A2.1,2.1 0 0 0 -4.6,3.2 H-1.0"/><path d="M-2.0,1.0 H4.6 A2.1,2.1 0 0 0 4.6,-3.2 H1.0"/></g></g>
<text x="337.3" y="597.1" font-size="8.9" fill="#8a8a8a" text-anchor="middle" font-weight="normal">protected division</text>
<rect x="54.6" y="544.8" width="26.699999999999996" height="12.200000000000045" rx="6.600000000000023" fill="none" stroke="#8c8c8c" stroke-width="1"/>
<text x="67.95" y="553.9" font-size="9.8" fill="#151515" text-anchor="middle" font-weight="normal">4</text>
<text x="67.95" y="568.4" font-size="8.9" fill="#8a8a8a" text-anchor="middle" font-weight="normal">hit</text>
<path d="M81.8,550.6 L135.5,550.6 L135.5,571.5" fill="none" stroke="#8e8e8e" stroke-width="1.1"/>
<polygon points="132.2,571.2 135.5,577.5 138.8,571.2" fill="#9a9a9a"/>
<rect x="106.2" y="575.3" width="63.60000000000001" height="58.30000000000007" rx="0" fill="#e04444" filter="url(#glow)"/>
<rect x="109.2" y="578.3" width="57.60000000000001" height="52.30000000000007" rx="0" fill="#ffb2b2" stroke="#dc4e4e" stroke-width="2"/>
<path d="M131.8,586.6 H133.5 V581.6 H137.6 V586.6 M132.3,584.6 L134.7,583.2 M136.4,583.2 L138.6,584.4" fill="none" stroke="#111" stroke-width="1.4"/>
<text x="164.1" y="593.9" font-size="8" fill="#151515" text-anchor="end" font-weight="normal">t</text>
<text x="164.1" y="620.8" font-size="8" fill="#151515" text-anchor="end" font-weight="normal">tprev</text>
<text x="137.5" y="642.0" font-size="8.9" fill="#8a8a8a" text-anchor="middle" font-weight="normal">time capture</text>
<path d="M167.8,590.4 L196.5,590.4" fill="none" stroke="#8e8e8e" stroke-width="1.1"/>
<polygon points="195.9,587.1 202.6,590.4 195.9,593.6999999999999" fill="#9a9a9a"/>
<circle cx="212" cy="591" r="9.2" fill="#e3f1da" stroke="#62b846" stroke-width="2"/>
<path d="M205.6,590.5 H210 M207.8,588.3 V592.7 M211,595 H215" stroke="#111" stroke-width="1.1"/>
<path d="M167.8,617.5 L211.9,617.5 L211.9,607" fill="none" stroke="#8e8e8e" stroke-width="1.1"/>
<polygon points="208.6,607.2 211.9,600.8 215.20000000000002,607.2" fill="#9a9a9a"/>
<path d="M221.2,590.6 L256.5,590.6 L256.5,568.2 L299.5,568.2" fill="none" stroke="#8e8e8e" stroke-width="1.1"/>
<polygon points="299.2,564.9000000000001 306,568.2 299.2,571.5" fill="#9a9a9a"/>
<text x="226" y="601.0" font-size="8.9" fill="#8a8a8a" text-anchor="start" font-weight="normal">deltaT</text>
<rect x="225.0" y="623.0" width="77.0" height="21.600000000000023" fill="none" stroke="#9c9c9c" stroke-width="1"/>
<text x="263" y="631.6" font-size="8.9" fill="#8c8c8c" text-anchor="middle" font-weight="normal">The deltaT signal</text>
<text x="263" y="641.4" font-size="8.9" fill="#8c8c8c" text-anchor="middle" font-weight="normal">can never be 0.</text>
<path d="M369,550.6 L404.3,550.6 L404.3,568.5 L442.5,568.5" fill="none" stroke="#8e8e8e" stroke-width="1.1"/>
<polygon points="442,565.2 449.2,568.5 442,571.8" fill="#9a9a9a"/>
<text x="381.6" y="547.2" font-size="8.9" fill="#8a8a8a" text-anchor="start" font-weight="normal">rate</text>
<rect x="439.8" y="514.8" width="170.49999999999994" height="22.200000000000045" fill="none" stroke="#9c9c9c" stroke-width="1"/>
<text x="524" y="523.1" font-size="8.9" fill="#8c8c8c" text-anchor="middle" font-weight="normal">The rate signal can never be less than</text>
<text x="524" y="533.8" font-size="8.9" fill="#8c8c8c" text-anchor="middle" font-weight="normal">or equal to the saturation lower limit of 0.</text>
<rect x="447" y="552.9" width="32.30000000000001" height="31.700000000000045" rx="0" fill="#e04444" filter="url(#glow)"/>
<rect x="450" y="555.9" width="26.30000000000001" height="25.700000000000045" rx="0" fill="#ffb2b2" stroke="#dc4e4e" stroke-width="2"/>
<path d="M463.1,557.5 V580 M451.5,568.5 H475" stroke="#e88080" stroke-width="0.6"/>
<path d="M452,576.5 H458.5 L469.7,559.6 H474" fill="none" stroke="#d84040" stroke-width="1"/>
<text x="462.9" y="593.0" font-size="8.9" fill="#8a8a8a" text-anchor="middle" font-weight="normal">Saturation</text>
<path d="M477.3,568.4 L499.4,568.4 L499.4,608.8 L515,608.8" fill="none" stroke="#8e8e8e" stroke-width="1.1"/>
<polygon points="514.5,605.5 521.2,608.8 514.5,612.0999999999999" fill="#9a9a9a"/>
<polygon points="355.2,617.2 402.7,617.2 418,627 402.7,636.8 355.2,636.8" fill="none" stroke="#999" stroke-width="1"/>
<text x="360.4" y="629.5" font-size="8.85" fill="#151515" text-anchor="start" font-weight="normal">[ySwitch]</text>
<polygon points="355.2,644.1 402.7,644.1 418,653.7 402.7,663.4 355.2,663.4" fill="none" stroke="#999" stroke-width="1"/>
<text x="362.7" y="656.5" font-size="8.85" fill="#151515" text-anchor="start" font-weight="normal">[yNorm]</text>
<path d="M418,627 L433.8,627" fill="none" stroke="#8e8e8e" stroke-width="1.1"/>
<polygon points="433.3,623.7 440.4,627 433.3,630.3" fill="#9a9a9a"/>
<path d="M418,653.7 L422.4,653.7 L427.8,658.4 L433.8,658.4" fill="none" stroke="#8e8e8e" stroke-width="1.1"/>
<polygon points="433.3,655.1 440.4,658.4 433.3,661.6999999999999" fill="#9a9a9a"/>
<rect x="440.9" y="613" width="44.2" height="59" fill="none" stroke="#a2a2a2" stroke-width="1"/>
<text x="462.4" y="646.0" font-size="10.5" fill="#a3a3a3" text-anchor="middle" font-weight="normal">merge</text>
<path d="M485.6,644.6 L515,644.6" fill="none" stroke="#8e8e8e" stroke-width="1.1"/>
<polygon points="514.5,641.3000000000001 521.2,644.6 514.5,647.9" fill="#9a9a9a"/>
<rect x="521.1" y="591" width="63.19999999999993" height="72.10000000000002" fill="#dfdfdf" stroke="#6f6f6f" stroke-width="2.2" stroke-dasharray="5.5,3.5"/>
<text x="523.6" y="612.3" font-size="8" fill="#151515" text-anchor="start" font-weight="normal">num</text>
<text x="523.6" y="648.0" font-size="8" fill="#151515" text-anchor="start" font-weight="normal">den</text>
<text x="580.7" y="630.3" font-size="8" fill="#151515" text-anchor="end" font-weight="normal">ratio</text>
<g transform="translate(529.1,655.1) rotate(-43)"><g fill="none" stroke="#fff" stroke-width="3.4" stroke-linecap="round"><path d="M2.0,-1.0 H-4.6 A2.1,2.1 0 0 0 -4.6,3.2 H-1.0"/><path d="M-2.0,1.0 H4.6 A2.1,2.1 0 0 0 4.6,-3.2 H1.0"/></g><g fill="none" stroke="#111" stroke-width="1.45" stroke-linecap="round"><path d="M2.0,-1.0 H-4.6 A2.1,2.1 0 0 0 -4.6,3.2 H-1.0"/><path d="M-2.0,1.0 H4.6 A2.1,2.1 0 0 0 4.6,-3.2 H1.0"/></g></g>
<text x="552.5" y="674.2" font-size="8.9" fill="#8a8a8a" text-anchor="middle" font-weight="normal">protected division1</text>
<path d="M584.3,626.9 L604.7,626.9" fill="none" stroke="#8e8e8e" stroke-width="1.1"/>
<polygon points="604.2,623.6 610.8,626.9 604.2,630.1999999999999" fill="#9a9a9a"/>
<rect x="611.5" y="620.8" width="26.100000000000023" height="12.300000000000068" rx="6.650000000000034" fill="none" stroke="#8c8c8c" stroke-width="1"/>
<text x="624.55" y="630.0" font-size="9.8" fill="#151515" text-anchor="middle" font-weight="normal">1</text>
<text x="624.55" y="644.4" font-size="8.9" fill="#8a8a8a" text-anchor="middle" font-weight="normal">out</text>
<text x="251.3" y="708.6" font-size="10.85" fill="#8a8a8a" text-anchor="start" font-weight="normal">Copyright 2010-2020 The MathWorks, Inc.</text>
<rect x="41.5" y="765.5" width="23" height="23" rx="3" fill="#c9c9c9" stroke="#c2c2c2"/>
<rect x="44.5" y="769" width="15.5" height="15.5" rx="2" fill="#fff" stroke="#3a6ea5" stroke-width="1.2"/>
<rect x="47" y="771.5" width="7" height="2.2" fill="#3a9ad8"/><rect x="54" y="771.5" width="3.5" height="2.2" fill="#f4a0a8"/><rect x="47" y="775.6" width="3" height="2.2" fill="#3a9ad8"/><rect x="50" y="775.6" width="7.5" height="2.2" fill="#f4a0a8"/><rect x="47" y="779.7" width="6" height="2.2" fill="#3a9ad8"/><rect x="53" y="779.7" width="4.5" height="2.2" fill="#f4a0a8"/>
<rect x="626" y="782" width="4" height="10" fill="#c4c4c4"/><rect x="631" y="782" width="4" height="10" fill="#c4c4c4"/><rect x="636" y="782" width="10" height="10" fill="#c4c4c4"/></svg><!--/CANVAS_SVG-->
<!-- right panel -->
<div id="panel" class="a" style="left:654px;top:120px;width:365px;height:675px;border:2px solid #2871a9;background:#f0f0f0;overflow:hidden"></div>
<div class="a" style="left:664px;top:125px;font-size:11px;line-height:14px;color:#222;letter-spacing:-0.1px">Coverage Details</div>
<svg class="a" style="left:987px;top:125px" width="30" height="14" viewBox="0 0 30 14"><path d="M3 1.5 h4 v6 h1 v1.5 h-2.3 v4 h-0.6 v-4 h-2.3 v-1.5 h1 z" fill="#666"/><path d="M17 2 L26 11 M26 2 L17 11" stroke="#555" stroke-width="1.3"/></svg>
<div id="pc" class="a" style="left:658px;top:148px;width:340px;height:627px;background:#fff;overflow:hidden">
<div class="h18" style="left:9px;top:2px">Objects Filtered from Coverage<br>Analysis</div>
<div class="b16" style="left:9.0px;top:68.6px">Filter <span class="lk">Filter_DivBy0</span></div>
<div class="s16" style="left:23.0px;top:123.1px">File</div>
<div class="s16" style="left:102.0px;top:132.9px">X:\Documents\MATLAB\Examples\R2020b\slcoverage</div>
<div class="s16" style="left:110.0px;top:170.9px">Exclude references to Protected Division</div>
<div class="s16" style="left:14.5px;top:180.0px">Description</div>
<div class="bx" style="left:8.0px;top:204.7px;width:324.0px;height:134.9px"></div>
<div class="bx" style="left:11.0px;top:207.2px;width:187.0px;height:29.4px"></div>
<div class="bx" style="left:200.0px;top:207.2px;width:129.0px;height:29.4px"></div>
<div class="bx" style="left:11.0px;top:239.2px;width:187.0px;height:47.1px"></div>
<div class="bx" style="left:200.0px;top:239.2px;width:129.0px;height:47.1px"></div>
<div class="bx" style="left:11.0px;top:288.8px;width:187.0px;height:47.2px"></div>
<div class="bx" style="left:200.0px;top:288.8px;width:129.0px;height:47.2px"></div>
<div class="b16" style="left:17.4px;top:214.1px">Filtered Model Object</div>
<div class="b16" style="left:206.0px;top:214.1px">Rationale</div>
<div class="s16" style="left:21.0px;top:246.4px">SubSystem block</div>
<div class="s16" style="left:18.0px;top:263.9px">"<span class="lk">protected division</span>"</div>
<div class="s16" style="left:21.0px;top:296.2px">SubSystem block</div>
<div class="s16" style="left:18.0px;top:313.6px">"<span class="lk">protected division1</span>"</div>
<div class="s16" style="left:206.0px;top:246.4px"><span class="lk">division by zero</span></div>
<div class="s16" style="left:206.0px;top:263.9px"><span class="lk">protection</span></div>
<div class="s16" style="left:206.0px;top:296.2px"><span class="lk">division by zero</span></div>
<div class="s16" style="left:206.0px;top:313.7px"><span class="lk">protection</span></div>
<div class="b16" style="left:9.0px;top:361.6px">Filter <span class="lk">Filter_Tick</span></div>
<div class="s16" style="left:23.0px;top:417.7px">File</div>
<div class="s16" style="left:102.0px;top:426.8px">X:\Documents\MATLAB\Examples\R2020b\slcoverage</div>
<div class="s16" style="left:110.0px;top:466.3px">Exclude the "tick" Stateflow temporal</div>
<div class="s16" style="left:14.5px;top:474.6px">Description</div>
<div class="bx" style="left:8.0px;top:499.2px;width:324.0px;height:121.5px"></div>
<div class="bx" style="left:11.0px;top:501.7px;width:237.8px;height:29.8px"></div>
<div class="bx" style="left:251.3px;top:501.7px;width:77.7px;height:29.8px"></div>
<div class="bx" style="left:11.0px;top:534.4px;width:237.8px;height:83.4px"></div>
<div class="bx" style="left:251.3px;top:534.4px;width:77.7px;height:83.4px"></div>
<div class="b16" style="left:17.4px;top:509.3px">Filtered Model Object</div>
<div class="b16" style="left:257.5px;top:509.3px">Rationale</div>
<div class="s16" style="left:21.0px;top:541.0px">Condition 1, "tick" and Condition</div>
<div class="s16" style="left:18.0px;top:558.8px">2, "after(4, tick)" in Transition</div>
<div class="s16" style="left:18.0px;top:576.6px">"<span class="lk">after(4, tick)</span>" from "<span class="lk">Clipped</span>" to</div>
<div class="s16" style="left:18.0px;top:594.4px">"<span class="lk">Full</span>"</div>
<div class="s16" style="left:257.5px;top:558.8px">tick never</div>
<div class="s16" style="left:257.5px;top:576.6px">false</div>
</div>
<div class="a" style="left:998px;top:148px;width:19px;height:644px;background:#f0f0f0"></div>
<svg class="a" style="left:1001px;top:153px" width="11" height="7"><polygon points="0.5,6.5 5.5,1 10.5,6.5" fill="#555"/></svg>
<div class="a" style="left:1000px;top:198px;width:13px;height:24px;background:#c2c2c2"></div>
<svg class="a" style="left:1001px;top:763px" width="11" height="7"><polygon points="0.5,0.5 5.5,6 10.5,0.5" fill="#555"/></svg>
<div class="a" style="left:656px;top:775px;width:342px;height:17px;background:#f0f0f0"></div>
<div class="a" style="left:998px;top:775px;width:19px;height:17px;background:#dcdcdc"></div>
<svg class="a" style="left:662px;top:779px" width="7" height="10"><polygon points="6,0.5 0.5,5 6,9.5" fill="#888"/></svg>
<div class="a" style="left:675px;top:778px;width:96px;height:11px;background:#c2c2c2"></div>
<svg class="a" style="left:987px;top:779px" width="7" height="10"><polygon points="0.5,0.5 6,5 0.5,9.5" fill="#333"/></svg>

<!-- status bar -->
<div class="a" style="left:1px;top:795px;width:1019px;height:20px;background:#f0f0f0"></div>
<div class="a" style="left:7px;top:802px;font-size:12px;line-height:14px;color:#222">Ready</div>
<div class="a" style="left:511px;top:802px;font-size:12px;line-height:14px;color:#222">90%</div>
<div class="a" style="left:900px;top:802px;font-size:12px;line-height:14px;color:#2a3a8a;letter-spacing:-0.2px">FixedStepDiscrete</div>
<div class="a" style="left:1000px;top:798px;width:1px;height:16px;background:#d0d0d0"></div>
<div class="a" style="left:0;top:816px;width:1020px;height:2px;background:repeating-linear-gradient(90deg,#333 0 3px,#9a9a9a 3px 5px)"></div><svg class="a" style="left:1006px;top:806px" width="10" height="10"><g fill="#aaa"><rect x="7" y="1" width="2" height="2"/><rect x="4" y="4" width="2" height="2"/><rect x="7" y="4" width="2" height="2"/><rect x="1" y="7" width="2" height="2"/><rect x="4" y="7" width="2" height="2"/><rect x="7" y="7" width="2" height="2"/></g></svg>
</body></html>
